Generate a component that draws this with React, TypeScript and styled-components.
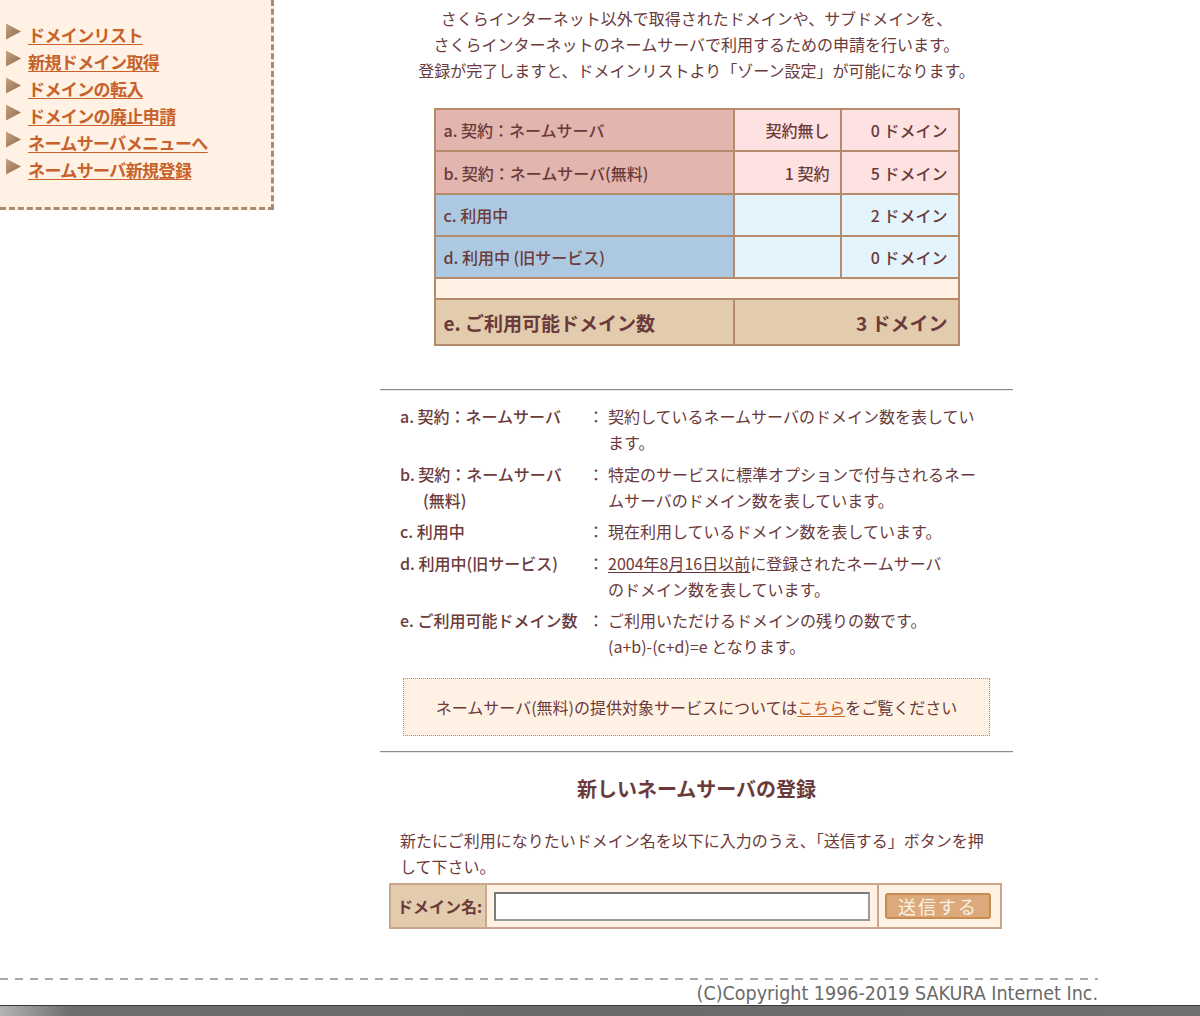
import React from 'react';
import styled, { createGlobalStyle } from 'styled-components';

const GlobalStyle = createGlobalStyle`
  html, body {
    margin: 0;
    padding: 0;
    background: #ffffff;
    overflow: hidden;
  }
  body {
    font-family: "Noto Sans CJK JP", "Noto Sans", sans-serif;
    font-size: 16px;
    color: #6b3a3a;
  }
`;

type Tone = 'pink' | 'pinkLight' | 'blue' | 'blueLight' | 'cream' | 'tan';

const TONES: Record<Tone, string> = {
  pink: '#e2b5ae',
  pinkLight: '#fde2e1',
  blue: '#adc9e2',
  blueLight: '#e3f4fc',
  cream: '#fff1e3',
  tan: '#e3cbad',
};

const MENU: string[] = [
  'ドメインリスト',
  '新規ドメイン取得',
  'ドメインの転入',
  'ドメインの廃止申請',
  'ネームサーバメニューへ',
  'ネームサーバ新規登録',
];

interface StatRow {
  label: string;
  count?: string;
  domains: string;
  labelTone: Tone;
  valueTone: Tone;
  height: number;
}

const STATS: StatRow[] = [
  { label: 'a. 契約：ネームサーバ', count: '契約無し', domains: '0 ドメイン', labelTone: 'pink', valueTone: 'pinkLight', height: 42 },
  { label: 'b. 契約：ネームサーバ(無料)', count: '1 契約', domains: '5 ドメイン', labelTone: 'pink', valueTone: 'pinkLight', height: 43 },
  { label: 'c. 利用中', count: '', domains: '2 ドメイン', labelTone: 'blue', valueTone: 'blueLight', height: 42 },
  { label: 'd. 利用中 (旧サービス)', count: '', domains: '0 ドメイン', labelTone: 'blue', valueTone: 'blueLight', height: 42 },
];

const Arrow: React.FC = () => (
  <svg width="17" height="17" viewBox="0 0 17 17" aria-hidden="true">
    <defs>
      <linearGradient id="arrowFill" x1="0" y1="0" x2="1" y2="1">
        <stop offset="0" stopColor="#c5a283" />
        <stop offset="1" stopColor="#8f6a4c" />
      </linearGradient>
    </defs>
    <polygon points="1,0.5 16,8.5 1,16.5" fill="url(#arrowFill)" />
  </svg>
);

export default function App() {
  const notes = [
    { key: 'a.', label: <>契約：ネームサーバ</>, desc: <>契約しているネームサーバのドメイン数を表しています。</> },
    {
      key: 'b.',
      label: <>契約：ネームサーバ<NoBreak>(無料)</NoBreak></>,
      desc: <>特定のサービスに標準オプションで付与されるネームサーバのドメイン数を表しています。</>,
    },
    { key: 'c.', label: <>利用中</>, desc: <>現在利用しているドメイン数を表しています。</> },
    {
      key: 'd.',
      label: <>利用中(旧サービス)</>,
      desc: <><Marked>2004年8月16日以前</Marked>に登録されたネームサーバ<br />のドメイン数を表しています。</>,
    },
    {
      key: 'e.',
      label: <>ご利用可能ドメイン数</>,
      desc: <>ご利用いただけるドメインの残りの数です。<br />(a+b)-(c+d)=e となります。</>,
    },
  ];

  return (
    <Page>
      <GlobalStyle />
      <Top>
        <Sidebar>
          <MenuList>
            {MENU.map(item => (
              <MenuItem key={item}>
                <Arrow />
                <MenuLink href="#">{item}</MenuLink>
              </MenuItem>
            ))}
          </MenuList>
        </Sidebar>
        <Main>
          <Intro>
            さくらインターネット以外で取得されたドメインや、サブドメインを、<br />
            さくらインターネットのネームサーバで利用するための申請を行います。<br />
            登録が完了しますと、ドメインリストより「ゾーン設定」が可能になります。
          </Intro>

          <StatTable>
            <colgroup>
              <col style={{ width: 299 }} />
              <col style={{ width: 107 }} />
              <col style={{ width: 118 }} />
            </colgroup>
            <tbody>
              {STATS.map(row => (
                <tr key={row.label}>
                  <Cell $tone={row.labelTone} $h={row.height}>{row.label}</Cell>
                  <Cell $tone={row.valueTone} $h={row.height} $align="right">{row.count}</Cell>
                  <Cell $tone={row.valueTone} $h={row.height} $align="right">{row.domains}</Cell>
                </tr>
              ))}
              <tr>
                <Cell $tone="cream" $h={21} colSpan={3} />
              </tr>
              <tr>
                <Cell $tone="tan" $h={46} $big>e. ご利用可能ドメイン数</Cell>
                <Cell $tone="tan" $h={46} $big $align="right" colSpan={2}>3 ドメイン</Cell>
              </tr>
            </tbody>
          </StatTable>

          <Rule $top={43} />

          <NoteList>
            {notes.map(note => (
              <React.Fragment key={note.key}>
                <NoteTerm>{note.key} {note.label}</NoteTerm>
                <NoteColon>：</NoteColon>
                <NoteDesc>{note.desc}</NoteDesc>
              </React.Fragment>
            ))}
          </NoteList>

          <InfoBox>
            ネームサーバ(無料)の提供対象サービスについては<InlineLink href="#">こちら</InlineLink>をご覧ください
          </InfoBox>

          <Rule $top={15} />

          <SectionTitle>新しいネームサーバの登録</SectionTitle>
          <Lead>
            新たにご利用になりたいドメイン名を以下に入力のうえ、「送信する」ボタンを押して下さい。
          </Lead>

          <DomainForm onSubmit={e => e.preventDefault()}>
            <FormLabel>ドメイン名:</FormLabel>
            <FormField>
              <DomainInput type="text" />
            </FormField>
            <FormAction>
              <SubmitButton type="submit">送信する</SubmitButton>
            </FormAction>
          </DomainForm>
        </Main>
      </Top>

      <Footer>
        <DashLine />
        <Copyright>(C)Copyright 1996-2019 SAKURA Internet Inc.</Copyright>
      </Footer>
      <WindowEdge />
    </Page>
  );
}

const Page = styled.div`
  width: 1200px;
  height: 1016px;
  display: flex;
  flex-direction: column;
`;

const Top = styled.div`
  display: flex;
  align-items: flex-start;
`;

const Sidebar = styled.nav`
  box-sizing: border-box;
  width: 274px;
  padding: 21px 0 24px 5px;
  background: #fff1e4;
  border-right: 3px dashed #ad8a6c;
  border-bottom: 3px dashed #ad8a6c;
`;

const MenuList = styled.ul`
  list-style: none;
  margin: 0;
  padding: 0;
`;

const MenuItem = styled.li`
  display: flex;
  align-items: center;
  gap: 6px;
  height: 27px;
  svg {
    flex: none;
    margin-top: -6px;
  }
`;

const MenuLink = styled.a`
  color: #c8612a;
  font-size: 17px;
  font-weight: 700;
  text-decoration: underline;
  text-underline-offset: 2px;
  letter-spacing: -0.6px;
`;

const Main = styled.main`
  width: 633px;
  margin-left: 106px;
  padding-top: 5px;
`;

const Intro = styled.p`
  margin: 0;
  text-align: center;
  line-height: 26px;
`;

const StatTable = styled.table`
  width: 524px;
  margin: 25px auto 0;
  border-collapse: collapse;
  border: 2px solid #b58b6c;
  table-layout: fixed;
`;

const Cell = styled.td<{ $tone: Tone; $h: number; $align?: 'left' | 'right'; $big?: boolean }>`
  height: ${p => p.$h - 2}px;
  padding: 0 10px 0 8px;
  border: 2px solid #b58b6c;
  background: ${p => TONES[p.$tone]};
  text-align: ${p => p.$align || 'left'};
  font-size: ${p => (p.$big ? '19px' : '16px')};
  font-weight: ${p => (p.$big ? 700 : 500)};
  line-height: 1;
  white-space: nowrap;
`;

const Rule = styled.hr<{ $top: number }>`
  margin: ${p => p.$top}px 0 0;
  height: 0;
  border: 0;
  border-top: 1px solid #8c8c8c;
  border-bottom: 1px solid #e6e6e6;
`;

const NoteList = styled.div`
  display: grid;
  grid-template-columns: 190px 18px 380px;
  row-gap: 5.5px;
  margin-top: 12px;
  padding-left: 20px;
  line-height: 26px;
`;

const NoteTerm = styled.div`
  padding-left: 23px;
  text-indent: -23px;
  font-weight: 500;
`;

const NoBreak = styled.span`
  white-space: nowrap;
`;

const NoteColon = styled.div`
  text-align: center;
  margin-left: -6px;
`;

const NoteDesc = styled.div``;

const Marked = styled.span`
  text-decoration: underline;
  text-underline-offset: 2px;
`;

const InfoBox = styled.div`
  margin: 19px 23px 0;
  padding: 15px 0;
  line-height: 26px;
  text-align: center;
  background: #fff2e4;
  border: 1px dotted #b58b6c;
`;

const InlineLink = styled.a`
  color: #c8612a;
  text-decoration: underline;
  text-underline-offset: 2px;
`;

const SectionTitle = styled.h2`
  margin: 23px 0 0;
  text-align: center;
  font-size: 20px;
  font-weight: 700;
  line-height: 26px;
`;

const Lead = styled.p`
  margin: 25px 0 0;
  padding: 0 16px 0 20px;
  line-height: 26px;
`;

const DomainForm = styled.form`
  box-sizing: border-box;
  display: flex;
  width: 613px;
  height: 46px;
  margin: 4px 0 0 9px;
  border: 2px solid #c9a68c;
`;

const FormLabel = styled.label`
  display: flex;
  align-items: center;
  box-sizing: border-box;
  width: 96px;
  padding-left: 6px;
  background: #e3cbad;
  border-right: 2px solid #c9a68c;
  font-size: 16px;
  font-weight: 700;
  white-space: nowrap;
`;

const FormField = styled.div`
  display: flex;
  align-items: center;
  box-sizing: border-box;
  width: 392px;
  padding-left: 7px;
  background: #fff1e3;
  border-right: 2px solid #c9a68c;
`;

const DomainInput = styled.input`
  box-sizing: border-box;
  width: 376px;
  height: 29px;
  border: 2px solid #7a7a7a;
  border-bottom-color: #9a9a9a;
  border-right-color: #9a9a9a;
  background: #ffffff;
  outline: none;
`;

const FormAction = styled.div`
  display: flex;
  align-items: center;
  flex: 1;
  padding-left: 6px;
  background: #fff1e3;
`;

const SubmitButton = styled.button`
  box-sizing: border-box;
  width: 106px;
  height: 26px;
  padding: 0;
  background: #dcaa7a;
  border: 2px solid #c98c53;
  border-radius: 3px;
  color: #fbf2e8;
  font-family: "Noto Sans CJK JP", sans-serif;
  font-size: 18px;
  letter-spacing: 2px;
  line-height: 1;
`;

const Footer = styled.footer`
  width: 1098px;
  margin-top: 49px;
`;

const DashLine = styled.div`
  height: 2px;
  background: repeating-linear-gradient(to right, #a8a8a8 0 8px, transparent 8px 15px);
`;

const Copyright = styled.div`
  margin-top: 3px;
  text-align: right;
  font-family: "DejaVu Sans Condensed", "Liberation Sans Narrow", sans-serif;
  font-size: 19.5px;
  line-height: 21px;
  color: #6a6a6a;
`;

const WindowEdge = styled.div`
  margin-top: auto;
  height: 10px;
  border-top: 1px solid #3a3a3a;
  background: linear-gradient(to right, #b4b4b4 0, #6e6e6e 70px, #6a6a6a 50%, #707070 100%);
`;
